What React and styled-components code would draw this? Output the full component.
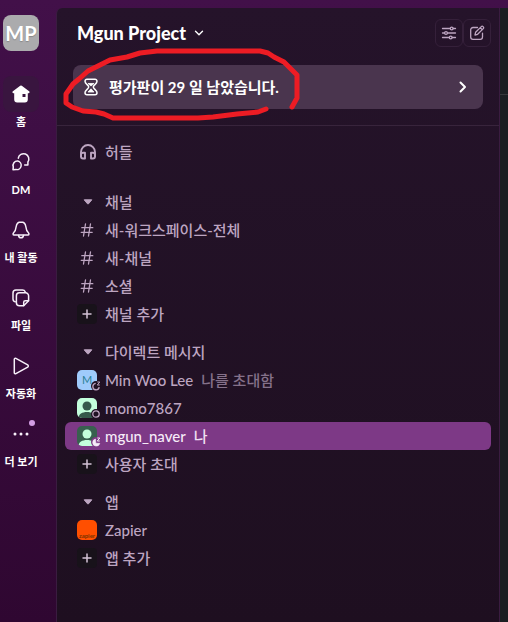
import React, { useState } from 'react';
import styled, { createGlobalStyle, css } from 'styled-components';

const channels = ['새-워크스페이스-전체', '새-채널', '소셜'];

const members = [
    { name: 'Min Woo Lee', note: '나를 초대함', type: 'letter', status: 'snooze' },
    { name: 'momo7867', type: 'person', status: 'away' },
    { name: 'mgun_naver', note: '나', type: 'personDark', status: 'active' },
];

const tabData = [
    { title: '홈', icon: <HomeIcon /> },
    { title: 'DM', icon: <DmIcon /> },
    { title: '내 활동', icon: <BellIcon /> },
    { title: '파일', icon: <FileIcon /> },
    { title: '자동화', icon: <PlayIcon /> },
    { title: '더 보기', icon: <MoreIcon />, badge: true },
];

export default function App() {
    const [tabIndex, setTabIndex] = useState(0);
    const [selected, setSelected] = useState('mgun_naver');

    return (
        <>
            <GlobalStyle />
            <Page>
                <Rail>
                    <Workspace type="button">MP</Workspace>
                    {tabData.map((item, index) => {
                        const { title, icon, badge } = item;

                        return (
                            <Tab key={title} type="button" onClick={() => setTabIndex(index)}>
                                <TabIcon $active={tabIndex === index}>
                                    {icon}
                                    {badge && <Badge />}
                                </TabIcon>
                                <TabLabel>{title}</TabLabel>
                            </Tab>
                        );
                    })}
                </Rail>

                <Sidebar>
                    <Header>
                        <TeamName type="button">
                            Mgun Project
                            <svg width="10" height="10" viewBox="0 0 10 10">
                                <path d="M1.5 3.2 5 6.7l3.5-3.5" fill="none" stroke="currentColor" strokeWidth="1.4" strokeLinecap="round" strokeLinejoin="round" />
                            </svg>
                        </TeamName>
                        <HeaderButton type="button" aria-label="필터">
                            <FilterIcon />
                        </HeaderButton>
                        <HeaderButton type="button" aria-label="새 메시지">
                            <ComposeIcon />
                        </HeaderButton>
                    </Header>

                    <BannerWrap>
                        <Banner type="button">
                            <HourglassIcon />
                            <BannerText>평가판이 29 일 남았습니다.</BannerText>
                            <svg width="8" height="12" viewBox="0 0 8 12">
                                <path d="M1.5 1.5 6 6l-4.5 4.5" fill="none" stroke="currentColor" strokeWidth="2" strokeLinecap="round" strokeLinejoin="round" />
                            </svg>
                        </Banner>
                        <RedMark viewBox="60 40 250 90" aria-hidden="true">
                            <path d="M266 109l-8 3-21 2-8 1-16 2-15 1H113l-9-4-8-2-13-1-11-4-6-4v-9l7-10 6-5 9-8 12-6 10-5 17-3 13-4 17-2h103l8 2 6 4 10 5 9 9 4 4v23l-5 9" />
                        </RedMark>
                    </BannerWrap>

                    <List>
                        <Section $gap={0}>
                            <Row type="button">
                                <RowIcon $shift><HeadphoneIcon /></RowIcon>
                                허들
                            </Row>
                        </Section>

                        <Section $gap={22}>
                            <SectionTitle title="채널" />
                            {channels.map((name) => (
                                <Row key={name} type="button" $active={selected === name} onClick={() => setSelected(name)}>
                                    <RowIcon><HashIcon /></RowIcon>
                                    {name}
                                </Row>
                            ))}
                            <AddRow title="채널 추가" />
                        </Section>

                        <Section $gap={10}>
                            <SectionTitle title="다이렉트 메시지" />
                            {members.map((el) => {
                                const { name, note, type, status } = el;
                                const active = selected === name;

                                return (
                                    <Row key={name} type="button" $active={active} onClick={() => setSelected(name)}>
                                        <RowIcon>
                                            <Avatar type={type} />
                                            <Status $active={active}><StatusIcon status={status} /></Status>
                                        </RowIcon>
                                        {name}
                                        {note && <Note $active={active}>{note}</Note>}
                                    </Row>
                                );
                            })}
                            <AddRow title="사용자 초대" />
                        </Section>

                        <Section $gap={10}>
                            <SectionTitle title="앱" />
                            <Row type="button">
                                <RowIcon><AppLogo>zapier</AppLogo></RowIcon>
                                Zapier
                            </Row>
                            <AddRow title="앱 추가" />
                        </Section>
                    </List>
                </Sidebar>

                <Main>
                    <MainHeader />
                </Main>
            </Page>
        </>
    );
}

function SectionTitle({ title }) {
    return (
        <Row type="button">
            <RowIcon $shift>
                <svg width="10" height="6" viewBox="0 0 10 6">
                    <path d="M1.2.8h7.6L5.5 4.8q-.5.6-1 0z" fill="currentColor" stroke="currentColor" strokeLinejoin="round" />
                </svg>
            </RowIcon>
            {title}
        </Row>
    );
}

function AddRow({ title }) {
    return (
        <Row type="button">
            <RowIcon>
                <PlusBox>
                    <svg width="10" height="10" viewBox="0 0 10 10">
                        <path d="M5 1v8M1 5h8" stroke="currentColor" strokeWidth="1.5" strokeLinecap="round" />
                    </svg>
                </PlusBox>
            </RowIcon>
            {title}
        </Row>
    );
}

// 아이콘

function HomeIcon() {
    return (
        <svg width="20" height="20" viewBox="0 0 20 20">
            <path fill="#fff" fillRule="evenodd" d="M9.2 1.7a1.3 1.3 0 0 1 1.6 0l7.3 5.6c.9.7.4 1.9-.6 1.9h-.7v6.2a3 3 0 0 1-3 3H6.200a3 3 0 0 1-3-3V9.2h-.7c-1 0-1.5-1.2-.6-1.9zM11.500 10v3h3v-3z" />
        </svg>
    );
}

function DmIcon() {
    return (
        <svg width="20" height="20" viewBox="0 0 20 20" fill="none" stroke="#f8f0fa" strokeWidth="1.5" strokeLinejoin="round" strokeLinecap="round">
            <path d="M7.300 6.200A5.300 5.300 0 1 1 16.900 10v3h-3.200" />
            <path d="M6.700 9a4.300 4.300 0 1 1-1.700 8.500l-3 .3.300-2.900A4.400 4.400 0 0 1 6.700 9z" />
        </svg>
    );
}

function BellIcon() {
    return (
        <svg width="20" height="20" viewBox="0 0 20 20" fill="none" stroke="#f8f0fa" strokeWidth="1.5" strokeLinejoin="round" strokeLinecap="round">
            <path d="M10 2c-2.800 0-4.500 2-4.800 4.500-.3 2.700-.8 4.700-2.600 6.300-.8.800-.8 2.300.5 2.300h13.800c1.300 0 1.300-1.500.5-2.300-1.800-1.600-2.300-3.600-2.600-6.300C14.500 4 12.800 2 10 2z" />
            <path d="M7.500 15.500c.3 1.500 1.200 2.300 2.500 2.300s2.200-.8 2.500-2.300" />
        </svg>
    );
}

function FileIcon() {
    return (
        <svg width="20" height="20" viewBox="0 0 20 20" fill="none" stroke="#f8f0fa" strokeWidth="1.5" strokeLinejoin="round" strokeLinecap="round">
            <path d="M4.200 13.800A3 3 0 0 1 2 10.900V5a3 3 0 0 1 3-3h6.500a3 3 0 0 1 2.700 1.800" />
            <path d="M8.400 4.800h6.200a3 3 0 0 1 3 3v5l-4.900 4.900H8.400a3 3 0 0 1-3-3V7.800a3 3 0 0 1 3-3z" />
            <path d="M17.500 12.800h-3.300a1.500 1.500 0 0 0-1.500 1.500v3.300" />
        </svg>
    );
}

function PlayIcon() {
    return (
        <svg width="20" height="20" viewBox="0 0 20 20" fill="none" stroke="#f8f0fa" strokeWidth="1.5" strokeLinejoin="round">
            <path d="M3.300 3.300v13.400c0 .9.900 1.300 1.600.9l11.800-6.500c.8-.5.800-1.700 0-2.200L4.900 2.400c-.7-.4-1.600 0-1.600.9z" />
        </svg>
    );
}

function MoreIcon() {
    return (
        <svg width="20" height="20" viewBox="0 0 20 20" fill="#f8f0fa">
            <circle cx="4" cy="10" r="1.5" />
            <circle cx="10" cy="10" r="1.5" />
            <circle cx="16" cy="10" r="1.5" />
        </svg>
    );
}

function FilterIcon() {
    return (
        <svg width="16" height="16" viewBox="0 0 16 16" fill="none" stroke="currentColor" strokeWidth="1.3" strokeLinecap="round">
            <path d="M1.500 3.500h7.700M12.200 3.500h2.300M1.500 8h2M6.500 8h8M1.500 12.500h6.700M11.200 12.500h3.300" />
            <circle cx="10.700" cy="3.500" r="1.400" />
            <circle cx="5" cy="8" r="1.400" />
            <circle cx="9.700" cy="12.500" r="1.400" />
        </svg>
    );
}

function ComposeIcon() {
    return (
        <svg width="16" height="16" viewBox="0 0 16 16" fill="none" stroke="currentColor" strokeWidth="1.3" strokeLinecap="round" strokeLinejoin="round">
            <path d="M8.500 2.500H4a2.300 2.300 0 0 0-2.300 2.300V12A2.300 2.300 0 0 0 4 14.300h7.200a2.300 2.300 0 0 0 2.300-2.300V8.200" />
            <path d="M6 10l.6-2.700 5.700-5.700c.5-.5 1.200-.5 1.700 0l.3.300c.5.500.5 1.200 0 1.700L8.600 9.300zM11.300 2.800l1.900 1.900" />
        </svg>
    );
}

function HourglassIcon() {
    return (
        <svg width="20" height="20" viewBox="0 0 20 20" fill="none" stroke="#fff" strokeWidth="1.5" strokeLinejoin="round">
            <path d="M6 2.200h8a2 2 0 0 1 2 2c0 2.700-3.700 3.900-3.700 5.800s3.700 3.100 3.700 5.800a2 2 0 0 1-2 2H6a2 2 0 0 1-2-2c0-2.700 3.700-3.900 3.700-5.800S4 6.900 4 4.200a2 2 0 0 1 2-2z" />
            <path d="M7 6.500h6L10 9zM10 11.800l3 3.200H7z" fill="#fff" strokeWidth=".8" />
        </svg>
    );
}

function HeadphoneIcon() {
    return (
        <svg width="18" height="18" viewBox="0 0 18 18" fill="none" stroke="currentColor" strokeWidth="1.9" strokeLinejoin="round">
            <path d="M2 14V9a7 7 0 0 1 14 0v5" />
            <path d="M6 9.800v5.700H4a2 2 0 0 1-2-2v-1.700a2 2 0 0 1 2-2zM12 9.800v5.700h2a2 2 0 0 0 2-2v-1.700a2 2 0 0 0-2-2z" />
        </svg>
    );
}

function HashIcon() {
    return (
        <svg width="14" height="14" viewBox="0 0 14 14" fill="none" stroke="currentColor" strokeWidth="1.3" strokeLinecap="round">
            <path d="M5.500 1 3.500 13M10.500 1l-2 12M1.800 4.700h11M1.200 9.300h11" />
        </svg>
    );
}

function Avatar({ type }) {
    if (type === 'letter') {
        return <LetterAvatar>M</LetterAvatar>;
    }

    const dark = type === 'personDark';
    const bg = dark ? '#38604f' : '#c3ffdc';
    const fg = dark ? '#c3ffdc' : '#35594b';

    return (
        <AvatarSvg viewBox="0 0 20 20" $bg={bg}>
            <circle cx="10" cy="8" r="4.500" fill={fg} />
            <path d="M1.500 20c0-4 3.800-6 8.500-6s8.500 2 8.500 6z" fill={fg} />
        </AvatarSvg>
    );
}

function StatusIcon({ status }) {
    return (
        <svg width="10" height="10" viewBox="0 0 10 10" fill="none" stroke="currentColor" strokeWidth="1.3">
            {status === 'away' && <circle cx="5" cy="5" r="3.2" />}
            {status === 'snooze' && (
                <>
                    <path d="M4.700 2.400a3.200 3.200 0 1 0 3.500 3.700" />
                    <path d="M6.300 1h2.500L6.300 4h2.500" strokeWidth="1" />
                </>
            )}
            {status === 'active' && (
                <>
                    <path d="M4.500 2a3.600 3.600 0 1 0 4.300 4.300H4.900z" fill="currentColor" strokeWidth=".6" />
                    <path d="M6.300 1h2.500L6.300 4h2.500" strokeWidth="1" />
                </>
            )}
        </svg>
    );
}

// 스타일

const GlobalStyle = createGlobalStyle`
    body {
        margin: 0;
        font-family: Lato, 'Noto Sans CJK KR', sans-serif;
        background: #2f0731;
    }
    *, *::before, *::after {
        box-sizing: border-box;
    }
    svg {
        display: block;
        flex: none;
    }
`;

const Button = styled.button`
    display: flex;
    align-items: center;
    padding: 0;
    border: 0;
    background: none;
    color: inherit;
    font: inherit;
    cursor: pointer;
`;

const Page = styled.div`
    display: flex;
    min-height: 100vh;
    padding-top: 8px;
    background: linear-gradient(#421049, #2f0731);
`;

const Rail = styled.nav`
    display: flex;
    flex-direction: column;
    align-items: center;
    width: 56px;
    padding: 7px 14px 0 0;
    color: #fff;
`;

const Workspace = styled(Button)`
    justify-content: center;
    width: 36px;
    height: 36px;
    margin-bottom: 25px;
    border-radius: 8px;
    background: #ababad;
    font-size: 20px;
    font-weight: 700;
    text-shadow: 0 1px 1px rgba(0, 0, 0, 0.2);
`;

const Tab = styled(Button)`
    flex-direction: column;
    height: 68px;
`;

const TabIcon = styled.span`
    position: relative;
    display: flex;
    align-items: center;
    justify-content: center;
    width: 36px;
    height: 36px;
    border-radius: 8px;
    background: ${({ $active }) => ($active ? '#39153f' : 'transparent')};
`;

const TabLabel = styled.span`
    margin-top: 2px;
    font-size: 11px;
    font-weight: 700;
    line-height: 16px;
    white-space: nowrap;
`;

const Badge = styled.span`
    position: absolute;
    top: 4px;
    right: 4px;
    width: 6px;
    height: 6px;
    border-radius: 50%;
    background: #d39ee4;
`;

const Sidebar = styled.aside`
    flex: 1;
    min-width: 0;
    border: 1px solid #3a1c40;
    border-width: 0 1px;
    border-radius: 6px 0 0 0;
    background: linear-gradient(#25132a, #1e0f20);
    color: #bda5c1;
`;

const Header = styled.header`
    display: flex;
    align-items: center;
    height: 49px;
    padding: 0 8px 0 20px;
`;

const TeamName = styled(Button)`
    gap: 8px;
    margin-right: auto;
    color: #fff;
    font-size: 18px;
    font-weight: 900;
`;

const HeaderButton = styled(Button)`
    justify-content: center;
    width: 28px;
    height: 28px;
    border: 1px solid #35203a;
    border-radius: 6px;
`;

const BannerWrap = styled.div`
    position: relative;
    padding: 8px 16px 16px;
    border-bottom: 1px solid #38243c;
`;

const Banner = styled(Button)`
    width: 100%;
    height: 44px;
    padding: 0 16px 0 8px;
    border-radius: 8px;
    background: #4a354e;
    color: #fff;
`;

const BannerText = styled.span`
    flex: 1;
    margin-left: 8px;
    font-size: 15px;
    font-weight: 700;
    line-height: 20px;
    text-align: left;
`;

const RedMark = styled.svg`
    position: absolute;
    top: -17px;
    left: 3px;
    width: 250px;
    height: 90px;
    pointer-events: none;
    fill: none;
    stroke: #ed1c24;
    stroke-width: 5px;
    stroke-linecap: round;
    stroke-linejoin: round;
`;

const List = styled.div`
    padding: 12px 8px;
`;

const Section = styled.section`
    margin-top: ${({ $gap }) => $gap}px;
`;

const Row = styled(Button)`
    width: 100%;
    height: 28px;
    padding: 0 12px;
    border-radius: 6px;
    font-size: 15px;
    font-weight: 500;
    line-height: 20px;
    white-space: nowrap;
    ${({ $active }) => $active && css`
        background: #7d3986;
        color: #f6ebf8;
    `}
`;

const RowIcon = styled.span`
    position: relative;
    display: flex;
    align-items: center;
    justify-content: center;
    width: 20px;
    height: 20px;
    margin-right: 8px;
    padding-left: ${({ $shift }) => ($shift ? 2 : 0)}px;
`;

const PlusBox = styled.span`
    display: flex;
    align-items: center;
    justify-content: center;
    width: 20px;
    height: 20px;
    border-radius: 4px;
    background: #18121a;
    color: #d3c3d6;
`;

const LetterAvatar = styled.span`
    width: 20px;
    height: 20px;
    border-radius: 5px;
    background: #9fcbfb;
    color: #2b7f96;
    font-size: 11px;
    font-weight: 400;
    line-height: 20px;
    text-align: center;
`;

const AvatarSvg = styled.svg`
    width: 20px;
    height: 20px;
    border-radius: 5px;
    background: ${({ $bg }) => $bg};
`;

const Status = styled.span`
    position: absolute;
    right: -4px;
    bottom: -1px;
    border-radius: 50%;
    background: ${({ $active }) => ($active ? '#7d3986' : '#201123')};
`;

const Note = styled.span`
    margin-left: 8px;
    color: ${({ $active }) => ($active ? '#eedff0' : '#85718a')};
`;

const AppLogo = styled.span`
    display: flex;
    align-items: flex-end;
    justify-content: center;
    width: 20px;
    height: 20px;
    border-radius: 5px;
    background: #ff4f00;
    color: #7a3300;
    font-size: 6px;
    font-weight: 700;
    line-height: 8px;
`;

const Main = styled.main`
    width: 8px;
    background: #1a1f22;
`;

const MainHeader = styled.header`
    height: 87px;
    border-bottom: 1px solid #35383b;
`;
